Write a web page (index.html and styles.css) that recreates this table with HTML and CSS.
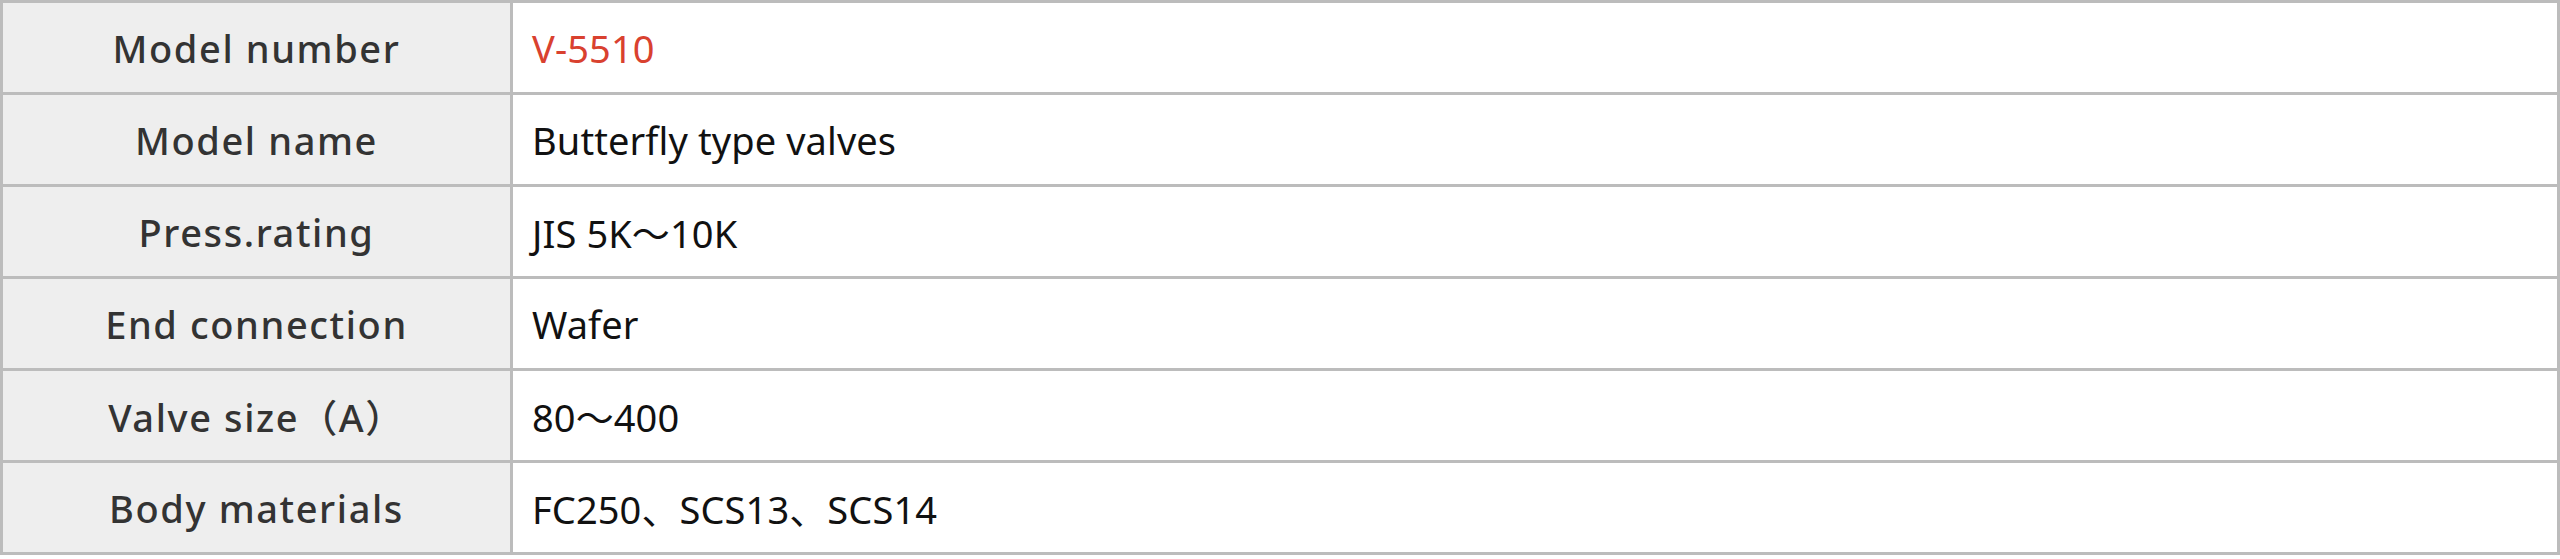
FILE: index.html
```html
<!DOCTYPE html>
<html lang="en">
<head>
<meta charset="utf-8">
<title>Specification</title>
<link rel="stylesheet" href="styles.css">
</head>
<body>
<table class="spec">
  <colgroup><col class="spec-col-label"><col></colgroup>
  <tbody>
    <tr><th class="spec-label">Model number</th><td class="spec-value spec-value-accent">V-5510</td></tr>
    <tr><th class="spec-label">Model name</th><td class="spec-value">Butterfly type valves</td></tr>
    <tr><th class="spec-label">Press.rating</th><td class="spec-value">JIS 5K〜10K</td></tr>
    <tr><th class="spec-label">End connection</th><td class="spec-value">Wafer</td></tr>
    <tr><th class="spec-label">Valve size（A）</th><td class="spec-value">80〜400</td></tr>
    <tr><th class="spec-label">Body materials</th><td class="spec-value">FC250、SCS13、SCS14</td></tr>
  </tbody>
</table>
</body>
</html>
```
FILE: styles.css
```css
html, body {
  margin: 0;
  padding: 0;
  background: #ffffff;
}

.spec {
  width: 2560px;
  table-layout: fixed;
  border-collapse: separate;
  border-spacing: 0;
  border-top: 3px solid #bcbcbc;
  border-left: 3px solid #bcbcbc;
  font-family: "Noto Sans", "Noto Sans CJK JP", sans-serif;
}

.spec-col-label {
  width: 510px;
}

.spec-label,
.spec-value {
  height: 92px;
  padding: 0;
  border-right: 3px solid #bcbcbc;
  border-bottom: 3px solid #bcbcbc;
  vertical-align: middle;
  box-sizing: border-box;
}

.spec-label {
  background: #eeeeee;
  color: #333333;
  font-weight: 500;
  font-size: 38px;
  letter-spacing: 1.6px;
  text-align: center;
}

.spec-value {
  background: #ffffff;
  color: #111111;
  font-weight: 400;
  font-size: 38px;
  letter-spacing: 0.1px;
  text-align: left;
  padding-left: 19px;
}

.spec-value-accent {
  color: #d9412f;
}
```
